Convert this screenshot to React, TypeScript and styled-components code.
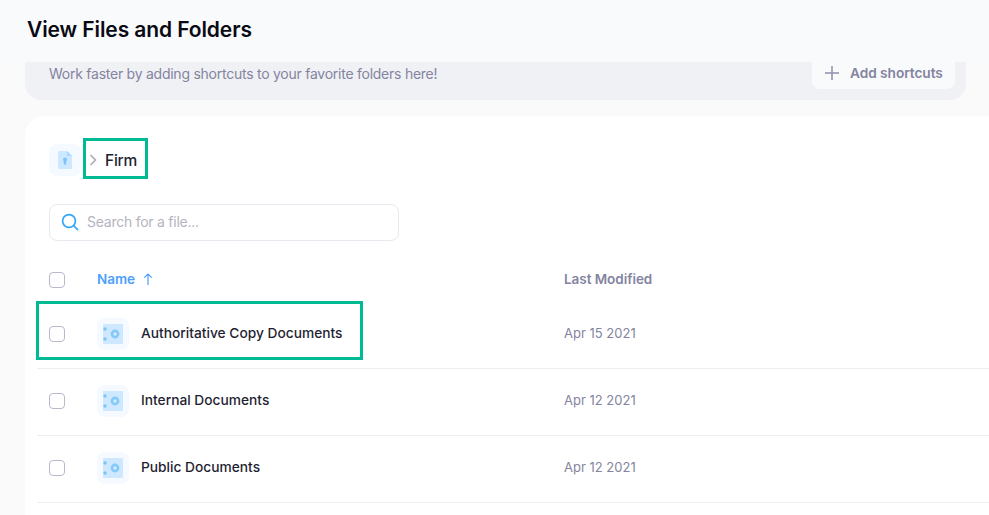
import React from "react";
import styled, { createGlobalStyle } from "styled-components";

const Global = createGlobalStyle`
  html, body { margin: 0; padding: 0; background: #fafafb; }
  body { font-family: "Inter", "Liberation Sans", sans-serif; overflow: hidden; }
`;

const Page = styled.div`
  width: 989px;
  height: 515px;
  position: relative;
  overflow: hidden;
`;

const TitleBar = styled.header`
  height: 62px;
  background: #f9fafc;
  padding-left: 27px;
  display: flex;
  align-items: center;
  box-sizing: border-box;
  padding-bottom: 3px;
`;

const Title = styled.h1`
  margin: 0;
  font-size: 21px;
  font-weight: 600;
  color: #0a0a14;
  letter-spacing: -0.1px;
`;

const ShortcutPanel = styled.section`
  margin: 0 23px 0 25px;
  height: 38px;
  background: #f0f1f5;
  border-radius: 0 0 16px 16px;
  display: flex;
  justify-content: space-between;
  align-items: flex-start;
  padding: 0 11px 0 24px;
`;

const ShortcutText = styled.p`
  margin: 3px 0 0;
  font-size: 14px;
  line-height: 17px;
  color: #8484a0;
  letter-spacing: -0.25px;
`;

const AddButton = styled.button`
  width: 143px;
  height: 27px;
  border: none;
  background: #f9fafc;
  border-radius: 0 0 8px 8px;
  display: flex;
  align-items: center;
  gap: 11px;
  padding: 0 0 5px 13px;
  font: 600 13.7px "Inter", "Liberation Sans", sans-serif;
  color: #8484a0;
  letter-spacing: -0.05px;
`;

const Card = styled.main`
  margin: 16px 0 0 25px;
  background: #fff;
  border-radius: 20px 0 0 0;
  height: 399px;
  padding: 28px 0 0 12px;
  box-sizing: border-box;
`;

const Breadcrumb = styled.nav`
  display: flex;
  align-items: center;
  height: 32px;
  padding-left: 12px;
`;

const IconTile = styled.div`
  width: 32px;
  height: 32px;
  border-radius: 8px;
  background: #f4faff;
  display: flex;
  align-items: center;
  justify-content: center;
  flex: none;
`;

const ChevronSlot = styled.span`
  margin-left: 8px;
  display: flex;
`;

const Crumb = styled.span`
  font-size: 15.5px;
  font-weight: 500;
  color: #1f1f33;
  margin-left: 8px;
  letter-spacing: -0.25px;
`;

const SearchBox = styled.div`
  margin: 28px 0 0 12px;
  width: 350px;
  height: 37px;
  box-sizing: border-box;
  border: 1px solid #e8e9f1;
  border-radius: 8px;
  display: flex;
  align-items: center;
  padding: 0 0 2px 11px;
  gap: 8px;
  font-size: 14px;
  color: #b4b4c0;
  letter-spacing: -0.25px;
`;

const HeaderRow = styled.div`
  display: flex;
  align-items: center;
  height: 48px;
  margin: 15px 0 -2px;
  padding-left: 12px;
`;

const Row = styled.div`
  display: flex;
  align-items: center;
  height: 64px;
  padding: 0 0 2px 12px;
  border-bottom: 1px solid #eceef2;
`;

const Box = styled.span`
  width: 16px;
  height: 16px;
  box-sizing: border-box;
  border: 1px solid #b7b9cc;
  border-radius: 4px;
  flex: none;
  background: #fff;
`;

const NameHead = styled.span`
  margin: 0 0 2px 32px;
  width: 467px;
  display: flex;
  align-items: center;
  gap: 8px;
  font-size: 13.5px;
  font-weight: 600;
  color: #4d9ffb;
  letter-spacing: -0.05px;
`;

const DateHead = styled.span`
  margin-bottom: 2px;
  font-size: 13.5px;
  font-weight: 600;
  color: #8484a0;
  letter-spacing: -0.05px;
`;

const NameCell = styled.div`
  margin-left: 32px;
  width: 467px;
  display: flex;
  align-items: center;
  gap: 12px;
`;

const FileName = styled.span`
  margin-bottom: 2px;
  font-size: 13.75px;
  font-weight: 500;
  color: #1f1f33;
  letter-spacing: 0px;
`;

const DateCell = styled.span`
  margin-bottom: 2px;
  font-size: 13px;
  color: #8484a0;
`;

const Highlight = styled.div<{ $x: number; $y: number; $w: number; $h: number }>`
  position: absolute;
  left: ${(p) => p.$x}px;
  top: ${(p) => p.$y}px;
  width: ${(p) => p.$w}px;
  height: ${(p) => p.$h}px;
  box-sizing: border-box;
  border: 3px solid #00ba94;
  pointer-events: none;
`;

const FileKeyIcon = () => (
  <svg width="14" height="18" viewBox="0 0 14 18">
    <path d="M1 0h8l5 5v12a1 1 0 0 1-1 1H1a1 1 0 0 1-1-1V1a1 1 0 0 1 1-1z" fill="#cde8ff" />
    <path d="M9 0l5 5H9z" fill="#a9d8ff" />
    <circle cx="7" cy="8.5" r="2" fill="#7cc4fa" />
    <rect x="5.8" y="9" width="2.4" height="4.5" fill="#7cc4fa" />
  </svg>
);

const VaultIcon = () => (
  <svg width="20" height="20" viewBox="0 0 20 20">
    <rect width="20" height="20" rx="1" fill="#cde8ff" />
    <circle cx="2" cy="5" r="1.7" fill="#7cc4fa" />
    <circle cx="2" cy="15" r="1.7" fill="#7cc4fa" />
    <circle cx="12" cy="10" r="4.4" fill="#86c9fb" />
    <circle cx="12" cy="10" r="1.7" fill="#d8edff" />
  </svg>
);

const Chevron = () => (
  <svg width="8" height="12" viewBox="0 0 8 12" fill="none" stroke="#a9abbb" strokeWidth="1.6">
    <path d="M1.5 1l5 5-5 5" />
  </svg>
);

const SearchIcon = () => (
  <svg width="18" height="18" viewBox="0 0 18 18" fill="none" stroke="#33a7fb" strokeWidth="1.7" strokeLinecap="round">
    <circle cx="8" cy="8" r="6.4" />
    <path d="M13 13l3.6 3.6" />
  </svg>
);

const Plus = () => (
  <svg width="14" height="14" viewBox="0 0 14 14" stroke="#8e8fa8" strokeWidth="1.5">
    <path d="M7 0v14M0 7h14" />
  </svg>
);

const ArrowUp = () => (
  <svg width="10" height="12" viewBox="0 0 10 12" fill="none" stroke="#4d9ffb" strokeWidth="1.2">
    <path d="M5 12V1M1.2 4.6L5 1l3.8 3.6" />
  </svg>
);

const files = [
  { name: "Authoritative Copy Documents", date: "Apr 15 2021" },
  { name: "Internal Documents", date: "Apr 12 2021" },
  { name: "Public Documents", date: "Apr 12 2021" },
];

export default function App() {
  return (
    <Page>
      <Global />
      <TitleBar>
        <Title>View Files and Folders</Title>
      </TitleBar>
      <ShortcutPanel>
        <ShortcutText>Work faster by adding shortcuts to your favorite folders here!</ShortcutText>
        <AddButton>
          <Plus />
          Add shortcuts
        </AddButton>
      </ShortcutPanel>
      <Card>
        <Breadcrumb>
          <IconTile>
            <FileKeyIcon />
          </IconTile>
          <ChevronSlot>
            <Chevron />
          </ChevronSlot>
          <Crumb>Firm</Crumb>
        </Breadcrumb>
        <SearchBox>
          <SearchIcon />
          Search for a file...
        </SearchBox>
        <HeaderRow>
          <Box />
          <NameHead>
            Name
            <ArrowUp />
          </NameHead>
          <DateHead>Last Modified</DateHead>
        </HeaderRow>
        {files.map((f) => (
          <Row key={f.name}>
            <Box />
            <NameCell>
              <IconTile>
                <VaultIcon />
              </IconTile>
              <FileName>{f.name}</FileName>
            </NameCell>
            <DateCell>{f.date}</DateCell>
          </Row>
        ))}
      </Card>
      <Highlight $x={83} $y={138} $w={65} $h={41} />
      <Highlight $x={36} $y={301} $w={327} $h={59} />
    </Page>
  );
}
